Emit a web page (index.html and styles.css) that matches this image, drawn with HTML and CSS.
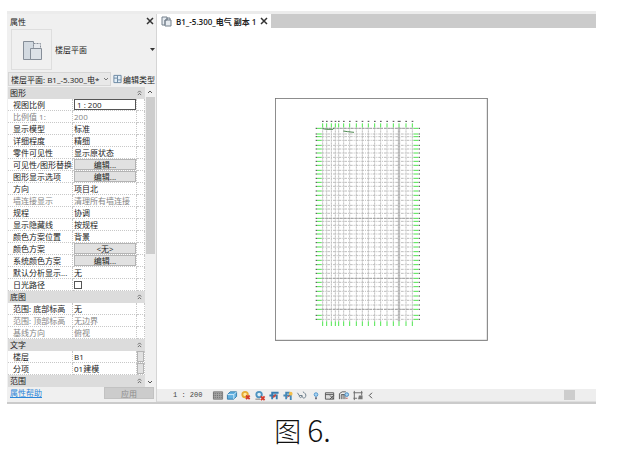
FILE: index.html
```html
<!DOCTYPE html>
<html lang="zh-CN">
<head>
<meta charset="utf-8">
<title>属性</title>
<link rel="stylesheet" href="styles.css">
</head>
<body>
<figure class="figure">
  <div class="window">
    <aside class="panel">
      <header class="panel-head">
        <span>属性</span>
        <button class="close" aria-label="关闭"><svg width="8" height="8" viewBox="0 0 8 8"><path d="M1 1L7 7M7 1L1 7"/></svg></button>
      </header>
      <button class="type">
        <span class="thumb">
          <svg width="22" height="22" viewBox="0 0 22 22">
            <path d="M2.500 2.500H12.500V20.500H2.500Z" fill="#d3dae1" stroke="#868e98"/>
            <path d="M12.500 4.500H19.500V9.500H12.500Z" fill="#e6e9ed" stroke="#868e98" stroke-dasharray="2 1"/>
            <path d="M9.500 9.500H20.500V20.500H9.500Z" fill="#dde2e7" stroke="#868e98"/>
          </svg>
        </span>
        <span class="type-name">楼层平面</span>
        <svg width="6" height="4" viewBox="0 0 6 4"><path d="M1 0H6L3.500 3Z" fill="#333"/></svg>
      </button>
      <div class="instance">
        <div class="picker">
          <select aria-label="实例"><option>楼层平面: B1_-5.300_电*</option></select>
          <svg width="6" height="6" viewBox="0 0 6 6"><path d="M1 2L3 4L5 2" fill="none" stroke="#777"/></svg>
        </div>
        <button class="edit-type">
          <svg width="9" height="10" viewBox="0 0 10 10"><path d="M1 1H5V4H1ZM5 1H9V9H1V4M5 4V9M5 6H9" fill="#e3eef7" stroke="#64829e"/></svg>
          编辑类型
        </button>
      </div>
      <div class="props">
        <table>
          <colgroup><col class="c-name"><col class="c-value"><col class="c-more"></colgroup>
          <tbody>
            <tr class="group"><th colspan="2">图形</th><td><svg width="5" height="6" viewBox="0 0 6 7"><path d="M1 3L3 1L5 3M1 6L3 4L5 6"/></svg></td></tr>
            <tr><th><label for="scale">视图比例</label></th><td><input id="scale" class="field" type="text" value="1 : 200"></td><td></td></tr>
            <tr class="off"><th>比例值 1:</th><td>200</td><td></td></tr>
            <tr><th>显示模型</th><td>标准</td><td></td></tr>
            <tr><th>详细程度</th><td>精细</td><td></td></tr>
            <tr><th>零件可见性</th><td>显示原状态</td><td></td></tr>
            <tr><th>可见性/图形替换</th><td><button class="cell-btn">编辑...</button></td><td></td></tr>
            <tr><th>图形显示选项</th><td><button class="cell-btn">编辑...</button></td><td></td></tr>
            <tr><th>方向</th><td>项目北</td><td></td></tr>
            <tr class="off"><th>墙连接显示</th><td>清理所有墙连接</td><td></td></tr>
            <tr><th>规程</th><td>协调</td><td></td></tr>
            <tr><th>显示隐藏线</th><td>按规程</td><td></td></tr>
            <tr><th>颜色方案位置</th><td>背景</td><td></td></tr>
            <tr><th>颜色方案</th><td><button class="cell-btn">&lt;无&gt;</button></td><td></td></tr>
            <tr><th>系统颜色方案</th><td><button class="cell-btn">编辑...</button></td><td></td></tr>
            <tr><th>默认分析显示...</th><td>无</td><td></td></tr>
            <tr><th><label for="sun">日光路径</label></th><td><input id="sun" class="check" type="checkbox"></td><td></td></tr>
            <tr class="group"><th colspan="2">底图</th><td><svg width="5" height="6" viewBox="0 0 6 7"><path d="M1 3L3 1L5 3M1 6L3 4L5 6"/></svg></td></tr>
            <tr><th>范围: 底部标高</th><td>无</td><td></td></tr>
            <tr class="off"><th>范围: 顶部标高</th><td>无边界</td><td></td></tr>
            <tr class="off"><th>基线方向</th><td>俯视</td><td></td></tr>
            <tr class="group"><th colspan="2">文字</th><td><svg width="5" height="6" viewBox="0 0 6 7"><path d="M1 3L3 1L5 3M1 6L3 4L5 6"/></svg></td></tr>
            <tr><th>楼层</th><td>B1</td><td><button class="cell-btn" aria-label="关联楼层"></button></td></tr>
            <tr><th>分项</th><td>01建模</td><td><button class="cell-btn" aria-label="关联分项"></button></td></tr>
            <tr class="group"><th colspan="2">范围</th><td><svg width="5" height="6" viewBox="0 0 6 7"><path d="M1 3L3 1L5 3M1 6L3 4L5 6"/></svg></td></tr>
          </tbody>
        </table>
        <div class="scroll">
          <svg width="8" height="10" viewBox="0 0 8 10"><path d="M2 6L4 4L6 6"/></svg>
          <div class="scroll-track"><div class="scroll-thumb"></div></div>
          <svg width="8" height="10" viewBox="0 0 8 10"><path d="M2 4L4 6L6 4"/></svg>
        </div>
      </div>
      <footer class="panel-foot">
        <a href="#help">属性帮助</a>
        <button class="apply" disabled>应用</button>
      </footer>
    </aside>
    <main class="view">
      <div class="tabs">
        <div class="tab">
          <svg width="11" height="11" viewBox="0 0 11 11"><path d="M1 1H6V4H4V9H1ZM6 4V2H9V4M4 4H10V10H4Z" fill="#e6ebf0" stroke="#75808c"/></svg>
          <span>B1_-5.300_电气 副本 1</span>
          <button class="close" aria-label="关闭视图"><svg width="8" height="8" viewBox="0 0 8 8"><path d="M1 1L7 7M7 1L1 7"/></svg></button>
        </div>
      </div>
      <div class="canvas">
        <svg class="plan" viewBox="0 0 639 729" role="img" aria-label="轴网平面">
          <rect x="1" y="1" width="636" height="726" fill="#fff" stroke="#777" stroke-width="3"/>
          <g fill="none" stroke-width="3">
            <path class="axis-v" d="M143 88V670M155 88V670M169 88V670M181 88V670M191 88V670M206 88V670M224 88V670M244 88V670M262 88V670M280 88V670M299 88V670M317 88V670M336 88V670M355 88V670M372 88V670M393 88V670M412 88V670"/>
            <path class="axis-v axis-wide" d="M372 88V670"/>
            <path class="axis-h" d="M140 91H416M140 108H416M140 116H416M140 127H416M140 142H416M140 153H416M140 165H416M140 178H416M140 190H416M140 202H416M140 217H416M140 228H416M140 241H416M140 253H416M140 265H416M140 279H416M140 292H416M140 307H416M140 322H416M140 333H416M140 346H416M140 361H416M140 370H416M140 382H416M140 397H416M140 408H416M140 421H416M140 434H416M140 447H416M140 461H416M140 473H416M140 487H416M140 500H416M140 514H416M140 526H416M140 541H416M140 553H416M140 566H416M140 580H416M140 594H416M140 607H416M140 621H416M140 634H416M140 652H416M140 664H416"/>
            <path class="axis-main" d="M140 91H416M140 361H416M140 541H416M140 634H416"/>
          </g>
          <g class="ends">
            <path d="M143 76V88M155 76V88M169 76V88M181 76V88M191 76V88M206 76V88M224 76V88M244 76V88M262 76V88M280 76V88M299 76V88M317 76V88M336 76V88M355 76V88M372 76V88M393 76V88M412 76V88"/>
            <path d="M143 670V684M155 670V684M169 670V684M181 670V684M191 670V684M206 670V684M224 670V684M244 670V684M262 670V684M280 670V684M299 670V684M317 670V684M336 670V684M355 670V684M372 670V684M393 670V684M412 670V684"/>
            <path id="left-ends" d="M126 91H140M126 108H140M126 116H140M126 127H140M126 142H140M126 153H140M126 165H140M126 178H140M126 190H140M126 202H140M126 217H140M126 228H140M126 241H140M126 253H140M126 265H140M126 279H140M126 292H140M126 307H140M126 322H140M126 333H140M126 346H140M126 361H140M126 370H140M126 382H140M126 397H140M126 408H140M126 421H140M126 434H140M126 447H140M126 461H140M126 473H140M126 487H140M126 500H140M126 514H140M126 526H140M126 541H140M126 553H140M126 566H140M126 580H140M126 594H140M126 607H140M126 621H140M126 634H140M126 652H140M126 664H140"/>
            <use href="#left-ends" x="290"/>
          </g>
          <g class="heads">
            <path d="M141 70H146M153 70H158M167 70H172M179 70H184M189 70H194M204 70H209M222 70H227M242 70H247M260 70H265M278 70H283M297 70H302M315 70H320M334 70H339M353 70H358M368 70H377M391 70H396M410 70H415"/>
            <path id="left-heads" d="M122 91h4M122 108h4M122 116h4M122 127h4M122 142h4M122 153h4M122 165h4M122 178h4M122 190h4M122 202h4M122 217h4M122 228h4M122 241h4M122 253h4M122 265h4M122 279h4M122 292h4M122 307h4M122 322h4M122 333h4M122 346h4M122 361h4M122 370h4M122 382h4M122 397h4M122 408h4M122 421h4M122 434h4M122 447h4M122 461h4M122 473h4M122 487h4M122 500h4M122 514h4M122 526h4M122 541h4M122 553h4M122 566h4M122 580h4M122 594h4M122 607h4M122 621h4M122 634h4M122 652h4M122 664h4"/>
            <use href="#left-heads" x="309"/>
          </g>
          <path d="M143 92L155 94L174 94L177 89M205 99L218 101L237 103" fill="none" stroke="#4e8a50" stroke-width="3"/>
        </svg>
      </div>
      <div class="viewbar">
        <button class="scale">1 : 200</button>
        <div class="tools">
          <button aria-label="详细程度"><svg viewBox="0 0 12 12"><path d="M1 2H11V10H1Z" fill="#a6a6a6" stroke="#777"/><path d="M1 4H11M1 6H11M1 8H11" stroke="#666" stroke-dasharray="1 1"/></svg></button>
          <button aria-label="视觉样式"><svg viewBox="0 0 12 12"><path d="M1 5L4 2H11V7L8 10H1Z" fill="#62b0e0" stroke="#347ba8"/><path d="M1 5H8V10M8 5L11 2" fill="none" stroke="#d9effa"/></svg></button>
          <button aria-label="日光路径"><svg viewBox="0 0 12 12"><circle cx="5" cy="5" r="3" fill="#ffe9a0" stroke="#e6ac35" stroke-width="2"/><path class="red" d="M6 6L10 10M10 6L6 10"/></svg></button>
          <button aria-label="阴影"><svg viewBox="0 0 12 12"><circle cx="5" cy="5" r="3" fill="#dcf0fa" stroke="#4d93c0" stroke-width="2"/><path d="M1 10H6" stroke="#777"/><path class="red" d="M7 7L11 11M11 7L7 11"/></svg></button>
          <button aria-label="裁剪视图"><svg viewBox="0 0 12 12"><path d="M4 10V3H11M1 6H9V10" fill="none" stroke="#347bb0" stroke-width="2"/><path d="M5 8L8 5" stroke="#c94c42" stroke-width="2"/></svg></button>
          <button aria-label="显示裁剪区域"><svg viewBox="0 0 12 12"><path d="M4 10V3H8M1 6H9V11" fill="none" stroke="#4588b6" stroke-width="2"/><circle cx="9" cy="4" r="2" fill="#f3bd49"/><path d="M5 8L8 6" stroke="#c94c42"/></svg></button>
          <button aria-label="临时隐藏"><svg viewBox="0 0 12 12"><path d="M1 3L3 6C3 9 6 9 6 6C6 9 9 10 10 7C11 5 9 3 7 2M3 6L6 6" fill="none" stroke="#667887"/></svg></button>
          <button aria-label="显示隐藏的图元"><svg viewBox="0 0 12 12"><circle cx="6" cy="5" r="2" fill="#a9d4f2" stroke="#4e94cc"/><path d="M5 9H7" stroke="#667" stroke-width="2"/></svg></button>
          <button aria-label="临时视图属性"><svg viewBox="0 0 12 12"><path d="M1 3H10V10H1ZM1 5H10" fill="#ddd" stroke="#555"/><path d="M6 6L10 10M10 6L6 10" stroke="#444"/></svg></button>
          <button aria-label="分析模型"><svg viewBox="0 0 12 12"><path d="M1 10V4L4 2H8M3 10V5H7V10M5 5V10" fill="none" stroke="#555"/><circle cx="9" cy="5" r="2" fill="#a9d4f2" stroke="#3e83bb"/><path d="M8 9H10" stroke="#b55"/></svg></button>
          <button aria-label="约束"><svg viewBox="0 0 12 12"><path d="M2 1V11M10 1V6M1 3H11M1 9H5" fill="none" stroke="#666"/><path d="M7 6H11V10H6Z" fill="#777"/></svg></button>
          <button aria-label="收起"><svg viewBox="0 0 12 12"><path d="M6 3L3 6L6 9" fill="none" stroke="#444"/></svg></button>
        </div>
        <div class="hthumb"></div>
      </div>
    </main>
  </div>
  <figcaption>图 <span class="num">6.</span></figcaption>
</figure>
</body>
</html>
```
FILE: styles.css
```css
* { box-sizing: border-box; }

body {
  margin: 0;
  background: #fff;
  color: #222;
  font: 8px/11px "Open Sans", "Noto Sans CJK SC", sans-serif;
}

button, input, select {
  margin: 0;
  padding: 0;
  border: 0;
  border-radius: 0;
  background: none;
  color: inherit;
  font: inherit;
}

svg { display: block; flex: none; }

.figure { margin: 0; padding: 11px 21px 0 7px; }

.window {
  display: grid;
  grid-template-columns: 150px 1fr;
  border-top: 3px solid #ececec;
  border-bottom: 2px solid #cbcbcb;
  background: #f0f0f0;
}

.panel {
  display: flex;
  flex-direction: column;
  padding: 0 1px 2px;
  border-right: 1px solid #d5d5d5;
}

.panel-head {
  display: flex;
  justify-content: space-between;
  align-items: center;
  height: 14px;
  padding: 0 1px 0 2px;
}

.close path { fill: none; stroke: #333; stroke-width: 1.5; }

.type {
  display: flex;
  align-items: center;
  gap: 3px;
  height: 43px;
  padding: 0 0 0 3px;
  text-align: left;
}

.thumb {
  display: grid;
  place-items: center;
  width: 41px;
  height: 41px;
  border: 1px solid #dedede;
}

.type-name { flex: 1; }

.instance { display: flex; gap: 2px; height: 16px; padding: 1px 0; }

.picker {
  display: flex;
  align-items: center;
  flex: 1;
  min-width: 0;
  padding: 0 1px 0 2px;
  border: 1px solid #d6d6d6;
  background: #e8e8e8;
}

.picker select { flex: 1; min-width: 0; appearance: none; white-space: nowrap; }

.edit-type { display: flex; align-items: center; gap: 1px; white-space: nowrap; }

.props { display: flex; }

table {
  flex: 1;
  min-width: 0;
  table-layout: fixed;
  border-collapse: separate;
  border-spacing: 0;
  background: #fff;
}

.c-name { width: 65px; }
.c-more { width: 8px; }

th, td {
  height: 12px;
  padding: 0;
  border-bottom: 1px dotted #c8c8c8;
  border-right: 1px dotted #c8c8c8;
  font-weight: 400;
  text-align: left;
  white-space: nowrap;
}

th { padding-left: 5px; }
td { padding-left: 1px; }
td:last-child { padding: 0; }

.off { color: #858585; }

.group th, .group td { background: #dcdcdc; border-color: #dcdcdc; }
.group th { padding-left: 2px; }
.group path { fill: none; stroke: #555; }

.field {
  display: block;
  width: 100%;
  height: 11px;
  padding-left: 2px;
  border: 1px solid #555;
  background: #fff;
}

.cell-btn {
  display: block;
  width: 100%;
  height: 11px;
  border: 1px solid #b4b4b4;
  background: #e1e1e1;
  line-height: 9px;
}

.check {
  display: block;
  appearance: none;
  width: 8px;
  height: 8px;
  border: 1px solid #555;
  background: #fff;
}

.scroll {
  display: flex;
  flex-direction: column;
  align-items: center;
  width: 10px;
}

.scroll path { fill: none; stroke: #555; }
.scroll-track { flex: 1; width: 9px; }
.scroll-thumb { height: 56%; background: #cdcdcd; }

.panel-foot {
  display: flex;
  justify-content: space-between;
  height: 13px;
  padding: 0 1px 1px 2px;
}

.panel-foot a { color: #2b86d9; }

.apply {
  width: 50px;
  border: 1px solid #c2c2c2;
  background: #cccccc;
  color: #8b8b8b;
  line-height: 9px;
}

.view { display: flex; flex-direction: column; min-width: 0; }

.tabs { display: flex; height: 14px; background: #cbcbcb; }

.tab {
  display: flex;
  align-items: center;
  gap: 4px;
  padding: 0 3px 0 4px;
  background: #fff;
  font-weight: 600;
  white-space: nowrap;
}

.canvas {
  display: flex;
  justify-content: center;
  align-items: center;
  flex: 1;
  padding: 22px 0 0 10px;
  background: #fff;
}

.plan { width: 213px; }

.axis-v { stroke: #c0c0c0; stroke-dasharray: 7 2; }
.axis-wide { stroke-width: 7; stroke: #b4b4b4; }
.axis-h { stroke: #bdbdbd; stroke-dasharray: 8 3 3 3; }
.axis-main { stroke: #a0a0a0; stroke-dasharray: 8 3; }
.ends { fill: none; stroke: #4fe64f; stroke-width: 3; }
.heads { fill: none; stroke: #444; stroke-width: 3; }

.viewbar {
  display: flex;
  align-items: center;
  height: 13px;
  padding: 0 21px 0 16px;
  border-bottom: 1px solid #dedede;
  background: #eeeeee;
}

.scale { color: #444; font: 7px/10px "Liberation Mono", monospace; }

.tools { display: flex; gap: 2px; margin-left: 10px; }
.tools button, .tools svg { width: 12px; height: 11px; }
.red { fill: none; stroke: #d43a2c; stroke-width: 2; }

.hthumb { width: 11px; height: 10px; margin-left: auto; background: #cdcdcd; }

figcaption {
  padding: 5px 0 0 2px;
  color: #111;
  font: 300 27px/40px "Noto Sans CJK SC", sans-serif;
  text-align: center;
}

.num { font-size: 30px; }
```
